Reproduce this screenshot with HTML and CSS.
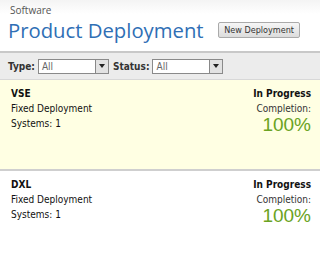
FILE: index.html
```html
<!DOCTYPE html>
<html lang="en">
  <head>
    <meta charset="UTF-8" />
    <title>Product Deployment</title>
    <link rel="stylesheet" href="styles.css">
  </head>
  <body>
    <div class="header">
      <div class="titles">
        <div class="app-name">Software</div>
        <h1>Product Deployment</h1>
      </div>
      <button type="button" class="new-btn">New Deployment</button>
    </div>
    <div class="filters">
      <label for="type">Type:</label>
      <div class="select">
        <span>All</span>
        <span class="arrow"></span>
      </div>
      <label for="status">Status:</label>
      <div class="select">
        <span>All</span>
        <span class="arrow"></span>
      </div>
    </div>
    <div class="deployment selected">
      <div class="info">
        <div class="name">VSE</div>
        <div>Fixed Deployment</div>
        <div>Systems: 1</div>
      </div>
      <div class="progress">
        <div class="state">In Progress</div>
        <div class="label">Completion:</div>
        <div class="percent">100%</div>
      </div>
    </div>
    <div class="deployment">
      <div class="info">
        <div class="name">DXL</div>
        <div>Fixed Deployment</div>
        <div>Systems: 1</div>
      </div>
      <div class="progress">
        <div class="state">In Progress</div>
        <div class="label">Completion:</div>
        <div class="percent">100%</div>
      </div>
    </div>
  </body>
</html>
```
FILE: styles.css
```css
* {
  margin: 0;
  padding: 0;
  box-sizing: border-box;
}
html, body {
  font-family: "DejaVu Sans Condensed", "DejaVu Sans", sans-serif;
  font-size: 10px;
  color: #111;
  background: #fff;
}
.header {
  display: flex;
  align-items: flex-start;
  padding: 3px 20px 0 8px;
  height: 53px;
  background: linear-gradient(#f4f4f4, #fff 14px);
  border-bottom: 2px solid #c8c8c8;
}
.titles {
  flex: 1;
  white-space: nowrap;
}
.app-name {
  font-family: "Open Sans", sans-serif;
  font-size: 10px;
  color: #555;
  padding-left: 2px;
}
h1 {
  font-family: "Open Sans", sans-serif;
  font-weight: normal;
  font-size: 20.3px;
  line-height: 26px;
  color: #2f6fb5;
}
.new-btn {
  margin-top: 19px;
  font-family: "DejaVu Sans Condensed", sans-serif;
  font-size: 9px;
  color: #333;
  padding: 2px 5px;
  border: 1px solid #aaa;
  border-radius: 2px;
  background: linear-gradient(#f6f6f6, #dcdcdc);
}
.filters {
  display: flex;
  align-items: center;
  gap: 3px;
  height: 27px;
  padding: 0 7px;
  background: #ececec;
  border-bottom: 1px solid #d8d8d8;
  font-weight: bold;
  color: #333;
}
.filters label {
  margin-left: 1px;
}
.select {
  display: flex;
  align-items: center;
  justify-content: space-between;
  width: 71px;
  height: 15px;
  background: #fff;
  border: 1px solid #8a8a8a;
  font-weight: normal;
  color: #666;
  padding-left: 3px;
}
.arrow {
  width: 13px;
  height: 13px;
  background: #e2e2e2;
  border-left: 1px solid #888;
  position: relative;
}
.arrow::after {
  content: "";
  position: absolute;
  left: 3px;
  top: 4px;
  border-left: 3px solid transparent;
  border-right: 3px solid transparent;
  border-top: 4px solid #222;
}
.deployment {
  display: flex;
  justify-content: space-between;
  height: 91px;
  padding: 6px 9px 0 11px;
  line-height: 15px;
  border-bottom: 2px solid #cfcfcf;
}
.deployment.selected {
  background: #ffffe3;
}
.name, .state {
  font-weight: bold;
}
.progress {
  text-align: right;
}
.label {
  color: #333;
  line-height: 13px;
  margin-top: 1px;
}
.percent {
  font-family: "Liberation Sans", sans-serif;
  font-size: 19px;
  line-height: 17px;
  margin-top: 1px;
  color: #6aa322;
}
```
